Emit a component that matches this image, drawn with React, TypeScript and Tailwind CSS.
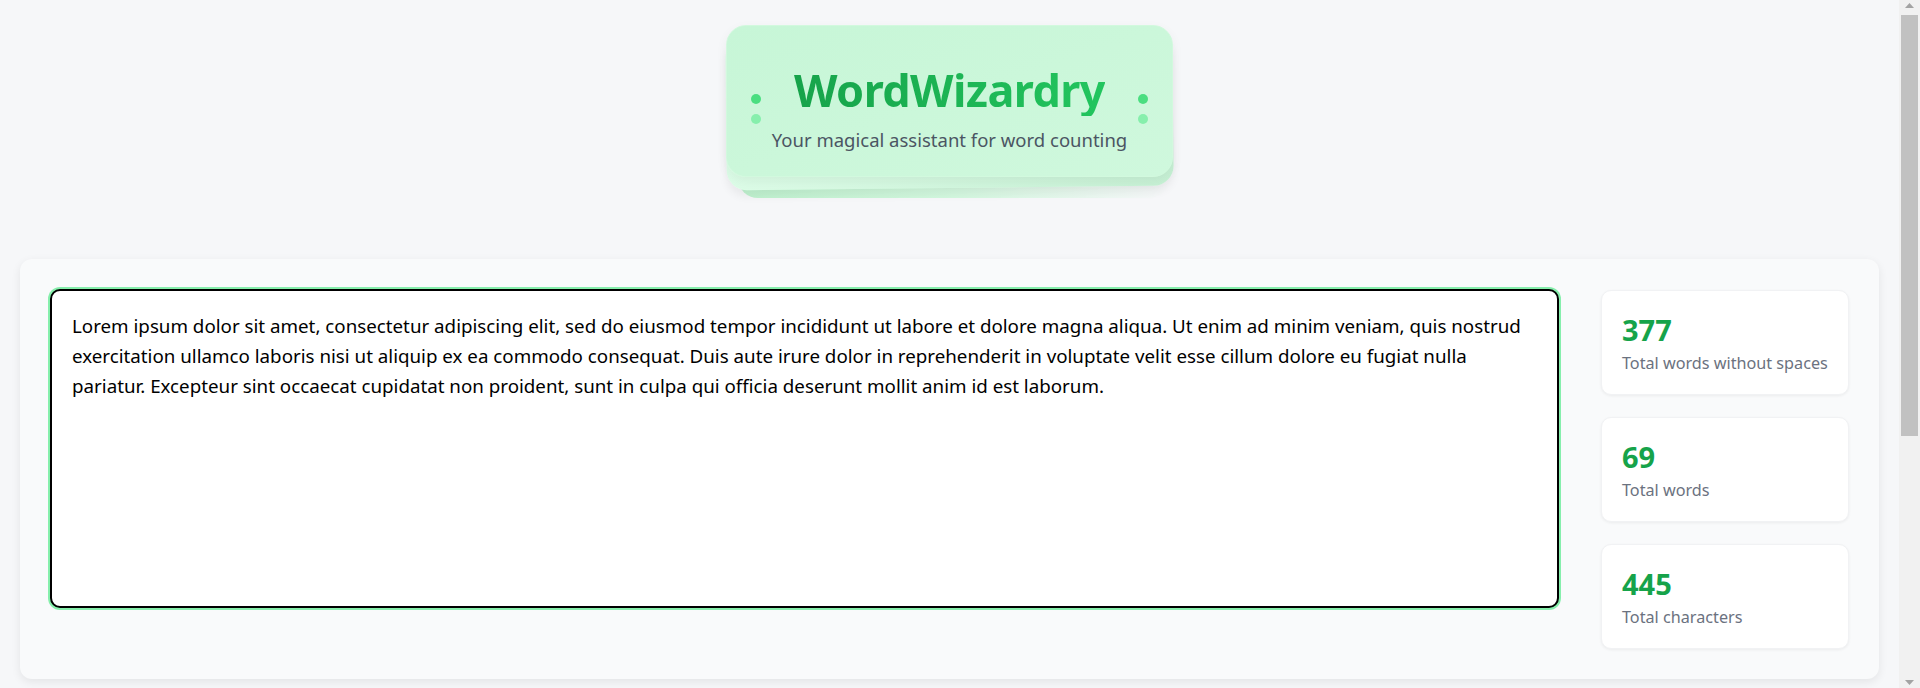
import { useState } from "react"

const sample =
  "Lorem ipsum dolor sit amet, consectetur adipiscing elit, sed do eiusmod tempor incididunt ut labore et dolore magna aliqua. Ut enim ad minim veniam, quis nostrud exercitation ullamco laboris nisi ut aliquip ex ea commodo consequat. Duis aute irure dolor in reprehenderit in voluptate velit esse cillum dolore eu fugiat nulla pariatur. Excepteur sint occaecat cupidatat non proident, sunt in culpa qui officia deserunt mollit anim id est laborum."

function StatCard({ value, label }: { value: number; label: string }) {
  return (
    <div className="rounded-[10px] border border-[#f1f2f4] bg-white px-5 pt-[21px] pb-[19px] shadow-[0_1px_3px_rgba(0,0,0,0.06)]">
      <p className="text-[29px] font-bold leading-[36px] text-[#16a34a]">{value}</p>
      <p className="mt-[3px] text-[16.2px] leading-6 text-[#6b7280]">{label}</p>
    </div>
  )
}

function Dots() {
  return (
    <div className="flex flex-col gap-[10px]">
      <span className="h-[10px] w-[10px] rounded-full bg-[#4ade80]" />
      <span className="h-[10px] w-[10px] rounded-full bg-[#86efac]" />
    </div>
  )
}

// window scrollbar as it shows in the capture
function Scrollbar() {
  return (
    <div className="flex w-[21px] shrink-0 flex-col bg-[#f1f1f1]">
      <div className="flex h-[15px] items-start justify-center pt-[3px]">
        <svg width="9" height="5" viewBox="0 0 9 5">
          <path d="M4.5 0L9 5H0z" fill="#a3a3a3" />
        </svg>
      </div>
      <div className="mx-[2px] h-[421px] bg-[#c1c1c1]" />
      <div className="flex-1" />
      <div className="flex h-[15px] items-end justify-center pb-[3px]">
        <svg width="9" height="5" viewBox="0 0 9 5">
          <path d="M0 0H9L4.5 5z" fill="#a3a3a3" />
        </svg>
      </div>
    </div>
  )
}

export default function App() {
  const [text, setText] = useState(sample)

  const words = text.trim() ? text.trim().split(/\s+/).length : 0
  const chars = text.length
  const noSpaces = text.replace(/\s/g, "").length

  return (
    <div
      className="flex h-[688px] overflow-hidden bg-[#f6f7f9]"
      style={{ fontFamily: '"Noto Sans", "Open Sans", sans-serif' }}
    >
      <div className="min-w-0 flex-1 px-5 pt-[25px]">
        {/* header badge */}
        <div className="flex justify-center">
          <div className="relative">
            <div className="absolute left-3 right-1 top-4 -bottom-[21px] rounded-[20px] bg-gradient-to-r from-[#bff2cf] via-[#d3f8df] to-transparent" />
            <div className="absolute inset-0 translate-y-[11px] rotate-[-0.6deg] rounded-[20px] bg-gradient-to-r from-[#dcfce7] to-[#c6f0d4] shadow-[0_6px_10px_rgba(0,0,0,0.06)]" />
            <div className="relative flex items-center gap-[11px] rounded-[20px] border border-[#d2f9de] bg-gradient-to-br from-[#c7f6d7] to-[#cff8dd] px-6 pt-[38px] pb-[22px] shadow-[0_4px_12px_rgba(0,0,0,0.05)]">
              <Dots />
              <div className="flex flex-col items-center">
                <h1 className="bg-gradient-to-r from-[#16a34a] to-[#22c55e] bg-clip-text text-[45px] font-bold leading-[52px] tracking-[-0.6px] text-transparent">
                  WordWizardry
                </h1>
                <p className="mt-[10px] text-[18.5px] leading-7 text-[#4b5563]">
                  Your magical assistant for word counting
                </p>
              </div>
              <Dots />
            </div>
          </div>
        </div>

        {/* main panel */}
        <div className="mt-[82px] flex items-start gap-[42px] rounded-xl bg-[#f9fafb] p-[30px] shadow-[0_3px_10px_rgba(0,0,0,0.08)]">
          <textarea
            value={text}
            onChange={(e) => setText(e.target.value)}
            className="h-[319px] min-w-0 flex-1 resize-none rounded-[10px] border-2 border-black bg-white p-5 text-[18.75px] leading-[30px] text-black outline-none ring-2 ring-[#86efac]"
          />
          <div className="flex w-[248px] shrink-0 flex-col gap-[22px] pt-px">
            <StatCard value={noSpaces} label="Total words without spaces" />
            <StatCard value={words} label="Total words" />
            <StatCard value={chars} label="Total characters" />
          </div>
        </div>
      </div>
      <Scrollbar />
    </div>
  )
}
